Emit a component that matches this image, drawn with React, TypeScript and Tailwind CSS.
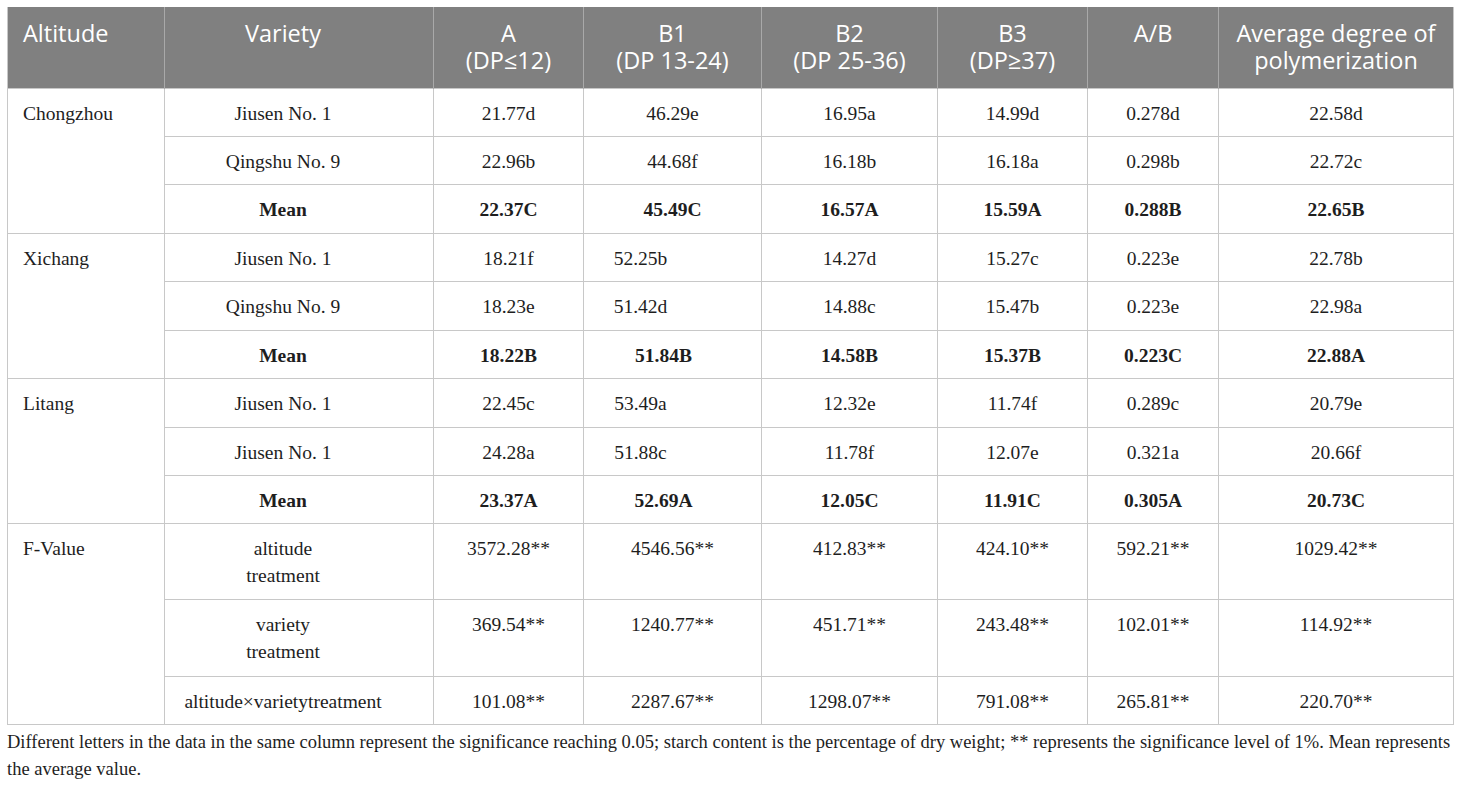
import React from "react";

type Row = {
  variety: string;
  vals: string[];
  bold?: boolean;
  h: number;
  b1pad?: string;
};

type Group = { altitude: string; rows: Row[] };

const groups: Group[] = [
  {
    altitude: "Chongzhou",
    rows: [
      { variety: "Jiusen No. 1", vals: ["21.77d", "46.29e", "16.95a", "14.99d", "0.278d", "22.58d"], h: 48 },
      { variety: "Qingshu No. 9", vals: ["22.96b", "44.68f", "16.18b", "16.18a", "0.298b", "22.72c"], h: 48 },
      { variety: "Mean", vals: ["22.37C", "45.49C", "16.57A", "15.59A", "0.288B", "22.65B"], bold: true, h: 49 },
    ],
  },
  {
    altitude: "Xichang",
    rows: [
      { variety: "Jiusen No. 1", vals: ["18.21f", "52.25b", "14.27d", "15.27c", "0.223e", "22.78b"], b1pad: "pr-[64px]", h: 48 },
      { variety: "Qingshu No. 9", vals: ["18.23e", "51.42d", "14.88c", "15.47b", "0.223e", "22.98a"], b1pad: "pr-[64px]", h: 49 },
      { variety: "Mean", vals: ["18.22B", "51.84B", "14.58B", "15.37B", "0.223C", "22.88A"], bold: true, b1pad: "pr-[18px]", h: 48 },
    ],
  },
  {
    altitude: "Litang",
    rows: [
      { variety: "Jiusen No. 1", vals: ["22.45c", "53.49a", "12.32e", "11.74f", "0.289c", "20.79e"], b1pad: "pr-[64px]", h: 49 },
      { variety: "Jiusen No. 1", vals: ["24.28a", "51.88c", "11.78f", "12.07e", "0.321a", "20.66f"], b1pad: "pr-[64px]", h: 48 },
      { variety: "Mean", vals: ["23.37A", "52.69A", "12.05C", "11.91C", "0.305A", "20.73C"], bold: true, b1pad: "pr-[18px]", h: 48 },
    ],
  },
  {
    altitude: "F-Value",
    rows: [
      { variety: "altitude\ntreatment", vals: ["3572.28**", "4546.56**", "412.83**", "424.10**", "592.21**", "1029.42**"], h: 76 },
      { variety: "variety\ntreatment", vals: ["369.54**", "1240.77**", "451.71**", "243.48**", "102.01**", "114.92**"], h: 77 },
      { variety: "altitude×varietytreatment", vals: ["101.08**", "2287.67**", "1298.07**", "791.08**", "265.81**", "220.70**"], h: 48 },
    ],
  },
];

const widths = [157, 269, 150, 178, 176, 150, 131, 235];

const headers: React.ReactNode[] = [
  "Altitude",
  "Variety",
  <>A<br />(DP≤12)</>,
  <>B1<br />(DP 13-24)</>,
  <>B2<br />(DP 25-36)</>,
  <>B3<br />(DP≥37)</>,
  "A/B",
  <>Average degree of<br />polymerization</>,
];

const cellBase =
  "border border-[#c8c8c8] align-top pt-[11px] leading-[27px] text-[19.5px] text-[#1e1e1e]";

export default function App() {
  return (
    <div className="bg-white w-[1460px] h-[786px] pl-[7px] pt-[7px]" style={{ fontFamily: '"Liberation Serif", serif' }}>
      <table className="table-fixed border-collapse w-[1446px]">
        <colgroup>
          {widths.map((w, i) => (
            <col key={i} style={{ width: w }} />
          ))}
        </colgroup>
        <thead>
          <tr className="h-[81px] bg-[#808080]">
            {headers.map((h, i) => (
              <th
                key={i}
                className={`align-top pt-[13px] font-normal text-white text-[23.5px] leading-[27px] border-x border-[#a9a9a9] first:border-l-[#c8c8c8] last:border-r-[#c8c8c8] ${
                  i === 0 ? "text-left pl-[15px]" : i === 1 ? "text-center pr-[32px]" : "text-center"
                }`}
                style={{ fontFamily: '"Open Sans", "Noto Sans", sans-serif' }}
              >
                {h}
              </th>
            ))}
          </tr>
        </thead>
        <tbody>
          {groups.map((g) =>
            g.rows.map((r, ri) => (
              <tr key={g.altitude + ri} style={{ height: r.h }}>
                {ri === 0 && (
                  <td rowSpan={g.rows.length} className={`${cellBase} text-left pl-[15px]`}>
                    {g.altitude}
                  </td>
                )}
                <td className={`${cellBase} text-center pr-[32px] whitespace-pre-line ${r.bold ? "font-bold" : ""}`}>
                  {r.variety}
                </td>
                {r.vals.map((v, vi) => (
                  <td
                    key={vi}
                    className={`${cellBase} text-center ${r.bold ? "font-bold" : ""} ${vi === 1 && r.b1pad ? r.b1pad : ""}`}
                  >
                    {v}
                  </td>
                ))}
              </tr>
            ))
          )}
        </tbody>
      </table>
      <p className="mt-[4px] text-[18.5px] leading-[27px] text-[#1e1e1e] whitespace-nowrap">
        Different letters in the data in the same column represent the significance reaching 0.05; starch content is the percentage of dry weight; ** represents the significance level of 1%. Mean represents
        <br />
        the average value.
      </p>
    </div>
  );
}
